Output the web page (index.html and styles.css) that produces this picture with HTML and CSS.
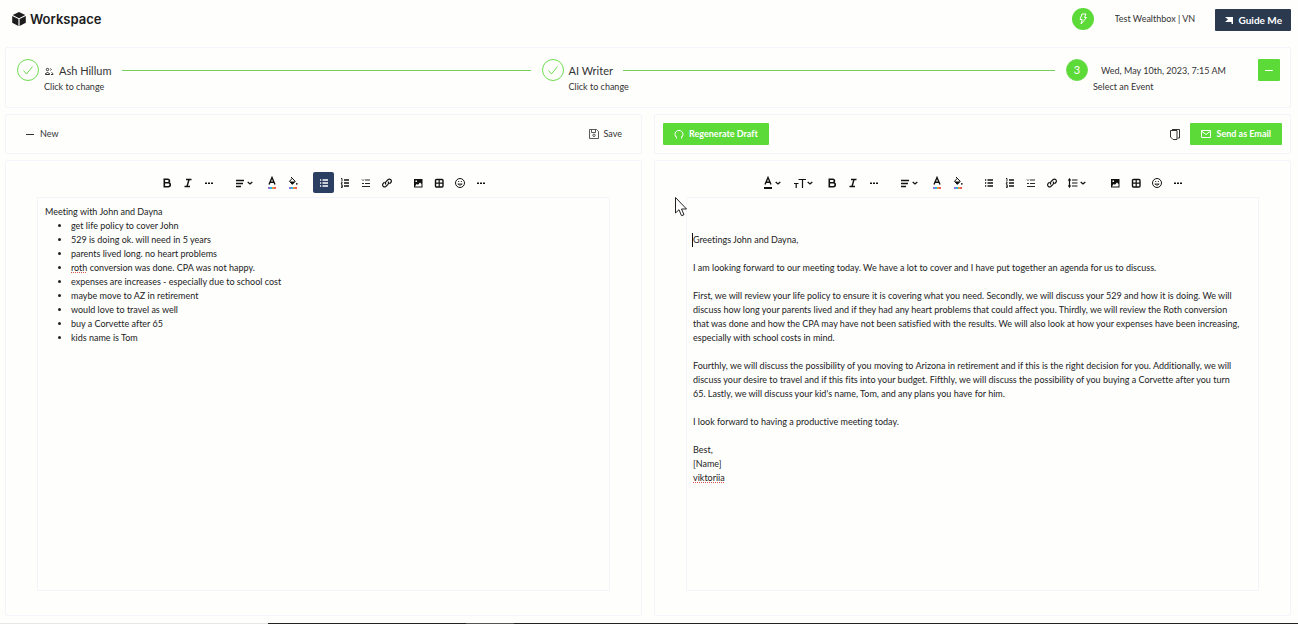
FILE: index.html
```html
<!DOCTYPE html>
<html lang="en">

<head>
    <meta charset="UTF-8">
    <meta name="viewport" content="width=device-width, initial-scale=1.0">
    <title>Workspace</title>
    <link rel="stylesheet" href="styles.css">
</head>

<body>
    <!-- icon sprite -->
    <svg class="sprite" xmlns="http://www.w3.org/2000/svg">
        <symbol id="i-cube" viewBox="0 0 14 14">
            <path fill="currentColor" d="M7 0l6.300 3L7 6.200.7 3zM.2 4l6.200 3.100V14L.2 10.700zM13.800 4L7.600 7.100V14l6.200-3.300z" />
        </symbol>
        <symbol id="i-bolt" viewBox="0 0 12 12">
            <path fill="none" stroke="currentColor" d="M5 1h4L7.500 4.500H9.500L4 11l1.200-4.500H3z" />
        </symbol>
        <symbol id="i-flag" viewBox="0 0 10 10">
            <path fill="currentColor" d="M1 2h8v7H7.500V7H1l3-2.500z" />
        </symbol>
        <symbol id="i-check" viewBox="0 0 12 12">
            <path fill="none" stroke="currentColor" d="M1.500 6.500l3 3.500 6-7.500" />
        </symbol>
        <symbol id="i-people" viewBox="0 0 10 10">
            <g fill="none" stroke="currentColor">
                <circle cx="3.500" cy="3.500" r="1.200" />
                <path d="M1.500 8.500V7.500q2-2 4 0v1zM6.500 2.500q1.500 1 0 2M7.500 6.500q1.500.5 1.500 2H7" />
            </g>
        </symbol>
        <symbol id="i-minus" viewBox="0 0 10 10">
            <path stroke="currentColor" d="M1 5.500h8" />
        </symbol>
        <symbol id="i-save" viewBox="0 0 10 10">
            <path fill="none" stroke="currentColor" stroke-width=".8" d="M.5.5h7l2 2v7h-9zM2.500.5v3h4v-3" />
            <circle cx="5" cy="6.300" r="1.200" fill="none" stroke="currentColor" stroke-width=".8" />
        </symbol>
        <symbol id="i-reload" viewBox="0 0 10 10">
            <path fill="none" stroke="currentColor" d="M2.500 8.500a4 4 0 1 1 5 0M2.500 9.500v-2M7.500 9.500v-2" />
        </symbol>
        <symbol id="i-copy" viewBox="0 0 10 11">
            <path fill="none" stroke="currentColor" d="M2 .5h7.500v8.500H7.500M.5 1.500h6.500v9H3L.5 8z" />
        </symbol>
        <symbol id="i-mail" viewBox="0 0 10 10">
            <path fill="none" stroke="currentColor" d="M.5 1.500h9v7h-9zM1 2.500l4 3 4-3" />
        </symbol>
        <symbol id="i-bold" viewBox="0 0 12 12">
            <path fill="none" stroke="currentColor" stroke-width="1.600" d="M3.300 2.300h3.400a1.700 1.700 0 0 1 0 3.500H3.300zM3.300 5.800h4a1.900 1.900 0 0 1 0 3.900h-4z" />
        </symbol>
        <symbol id="i-italic" viewBox="0 0 12 12">
            <path fill="none" stroke="currentColor" stroke-width="1.400" d="M4 2.500h5.500M2.500 9.500H8M7 2.500l-2 7" />
        </symbol>
        <symbol id="i-more" viewBox="0 0 12 12">
            <path fill="currentColor" d="M2 5.500h2v1.500H2zM5 5.500h2v1.500H5zM8 5.500h2v1.500H8z" />
        </symbol>
        <symbol id="i-align" viewBox="0 0 12 12">
            <path stroke="currentColor" stroke-width="1.400" d="M2 3.500h8M2 6.500h7M2 9.500h5" />
        </symbol>
        <symbol id="i-chevron" viewBox="0 0 6 6">
            <path fill="none" stroke="currentColor" stroke-width="1.300" d="M.7 2l2.300 2 2.300-2" />
        </symbol>
        <symbol id="i-color" viewBox="0 0 12 11">
            <path fill="none" stroke="currentColor" stroke-width="1.400" d="M3 8.500L6 1.500 9 8.500M4 6.200h4" />
        </symbol>
        <symbol id="i-fill" viewBox="0 0 12 11">
            <path fill="currentColor" d="M2.500 5.500h6L5.300 8.500z" />
            <path fill="none" stroke="currentColor" d="M4 1l4.200 4.300-2.900 3L2.500 5.300l2.800-3" />
            <circle cx="9.800" cy="7.800" r=".9" fill="currentColor" />
        </symbol>
        <symbol id="i-rainbow" viewBox="0 0 8 2">
            <path fill="#8d6fe0" d="M0 0h2v2H0z" />
            <path fill="#22b8e8" d="M2 0h2v2H2z" />
            <path fill="#e7963a" d="M4 0h2v2H4z" />
            <path fill="#ee5b50" d="M6 0h2v2H6z" />
        </symbol>
        <symbol id="i-size" viewBox="0 0 12 12">
            <path fill="none" stroke="currentColor" stroke-width="1.200" d="M4.500 2.500H12M8.500 2.500V11M0 6.500h4.500M2.200 6.500V11" />
        </symbol>
        <symbol id="i-list" viewBox="0 0 12 12">
            <path stroke="currentColor" stroke-width="1.400" d="M4.500 3H10M4.500 6H10M4.500 9H10M2 3h1.200M2 6h1.200M2 9h1.200" />
        </symbol>
        <symbol id="i-ordered" viewBox="0 0 12 12">
            <path stroke="currentColor" stroke-width="1.400" d="M5 3h5M5 6h5M5 9h5" />
            <path fill="none" stroke="currentColor" stroke-width=".9" d="M2 1.500h1v2.500M2 5h1.300l-1.300 2h1.500M2 8h1.300v2.500H2M2.300 9.300h1" />
        </symbol>
        <symbol id="i-check-list" viewBox="0 0 12 12">
            <path fill="none" stroke="currentColor" stroke-width=".9" d="M5 3h5M5 6.500h5M3 9.500h7M2 2.500l1 1 1-1M2 6l1 1 1-1M2 9.500h1" />
        </symbol>
        <symbol id="i-link" viewBox="0 0 12 12">
            <path fill="none" stroke="currentColor" stroke-width="1.200" d="M5 7.500a2 2 0 0 1 0-2.800l2.200-2.200a2 2 0 0 1 2.800 2.800L8.500 6.700M7 4.600a2 2 0 0 1 0 2.800L4.800 9.500A2 2 0 0 1 2 6.700l1.500-1.500" />
        </symbol>
        <symbol id="i-height" viewBox="0 0 12 12">
            <path fill="none" stroke="currentColor" stroke-width="1.200" d="M5 3h5.500M5 6h5.500M5 9h5.500M2.500 2v8M1.300 3.500L2.500 2l1.200 1.500M1.300 8.500L2.500 10l1.200-1.500" />
        </symbol>
        <symbol id="i-image" viewBox="0 0 12 12">
            <path fill="currentColor" fill-rule="evenodd" d="M2 2h8.500v8.500H2zM3 9.500h6.500V7L8 5.500l-2 2.300L4.500 7zM3.500 3.500v1.500H5V3.500z" />
        </symbol>
        <symbol id="i-table" viewBox="0 0 12 12">
            <rect x="2.500" y="2.500" width="7.500" height="7.500" rx="1" fill="none" stroke="currentColor" stroke-width="1.400" />
            <path stroke="currentColor" stroke-width="1.200" d="M6.200 2.500V10M2.500 6.200H10" />
        </symbol>
        <symbol id="i-smile" viewBox="0 0 12 12">
            <circle cx="6" cy="6" r="4.500" fill="none" stroke="currentColor" />
            <path fill="none" stroke="currentColor" stroke-width=".8" d="M4 4.500h1.200M6.800 4.500H8M3.800 7q2.200 2.600 4.400 0z" />
        </symbol>
    </svg>

    <header class="header">
        <h1 class="brand"><svg class="brand-icon"><use href="#i-cube" /></svg>Workspace</h1>
        <div class="header-right">
            <button class="bolt" aria-label="Integrations"><svg class="icon"><use href="#i-bolt" /></svg></button>
            <select class="select account" aria-label="Account">
                <option>Test Wealthbox | VN</option>
            </select>
            <button class="btn dark"><svg class="icon-sm"><use href="#i-flag" /></svg>Guide Me</button>
        </div>
    </header>

    <nav class="card steps">
        <div class="step">
            <span class="circle"><svg class="icon"><use href="#i-check" /></svg></span>
            <div class="step-body">
                <div class="step-title"><svg class="icon-sm"><use href="#i-people" /></svg>Ash Hillum<span class="step-line"></span></div>
                <a href="#" class="step-sub">Click to change</a>
            </div>
        </div>
        <div class="step">
            <span class="circle"><svg class="icon"><use href="#i-check" /></svg></span>
            <div class="step-body">
                <div class="step-title">AI Writer<span class="step-line"></span></div>
                <a href="#" class="step-sub">Click to change</a>
            </div>
        </div>
        <div class="step last">
            <span class="circle active">3</span>
            <div class="step-body">
                <select class="select event" id="event">
                    <option>Wed, May 10th, 2023, 7:15 AM</option>
                </select>
                <label class="step-sub" for="event">Select an Event</label>
            </div>
            <button class="btn square" aria-label="Collapse"><svg class="icon-sm"><use href="#i-minus" /></svg></button>
        </div>
    </nav>

    <main class="panels">
        <section class="panel">
            <div class="card actions">
                <button class="plain"><svg class="icon-sm"><use href="#i-minus" /></svg>New</button>
                <button class="plain"><svg class="icon-sm"><use href="#i-save" /></svg>Save</button>
            </div>
            <div class="card editor">
                <div class="toolbar">
                    <div class="tools">
                        <button class="tool" aria-label="Bold"><svg class="icon"><use href="#i-bold" /></svg></button>
                        <button class="tool" aria-label="Italic"><svg class="icon"><use href="#i-italic" /></svg></button>
                        <button class="tool" aria-label="More text"><svg class="icon"><use href="#i-more" /></svg></button>
                    </div>
                    <div class="tools">
                        <button class="tool wide" aria-label="Align"><svg class="icon"><use href="#i-align" /></svg><svg class="chevron"><use href="#i-chevron" /></svg></button>
                        <button class="tool stack" aria-label="Text color"><svg class="glyph"><use href="#i-color" /></svg><svg class="swatch"><use href="#i-rainbow" /></svg></button>
                        <button class="tool stack" aria-label="Background color"><svg class="glyph"><use href="#i-fill" /></svg><svg class="swatch"><use href="#i-rainbow" /></svg></button>
                    </div>
                    <div class="tools">
                        <button class="tool on" aria-label="Bullet list"><svg class="icon"><use href="#i-list" /></svg></button>
                        <button class="tool" aria-label="Numbered list"><svg class="icon"><use href="#i-ordered" /></svg></button>
                        <button class="tool" aria-label="Check list"><svg class="icon"><use href="#i-check-list" /></svg></button>
                        <button class="tool" aria-label="Link"><svg class="icon"><use href="#i-link" /></svg></button>
                    </div>
                    <div class="tools">
                        <button class="tool" aria-label="Image"><svg class="icon"><use href="#i-image" /></svg></button>
                        <button class="tool" aria-label="Table"><svg class="icon"><use href="#i-table" /></svg></button>
                        <button class="tool" aria-label="Emoji"><svg class="icon"><use href="#i-smile" /></svg></button>
                        <button class="tool" aria-label="More"><svg class="icon"><use href="#i-more" /></svg></button>
                    </div>
                </div>
                <div class="page notes" contenteditable="true" spellcheck="false">
                    <p>Meeting with John and Dayna</p>
                    <ul>
                        <li>get life policy to cover John</li>
                        <li>529 is doing ok. will need in 5 years</li>
                        <li>parents lived long. no heart problems</li>
                        <li><span class="typo">roth</span> conversion was done. CPA was not happy.</li>
                        <li>expenses are increases - especially due to school cost</li>
                        <li>maybe move to AZ in retirement</li>
                        <li>would love to travel as well</li>
                        <li>buy a Corvette after 65</li>
                        <li>kids name is Tom</li>
                    </ul>
                </div>
            </div>
        </section>

        <section class="panel">
            <div class="card actions draft">
                <button class="btn"><svg class="icon-sm"><use href="#i-reload" /></svg>Regenerate Draft</button>
                <div class="actions-right">
                    <button class="plain" aria-label="Copy"><svg class="copy"><use href="#i-copy" /></svg></button>
                    <button class="btn"><svg class="icon-sm"><use href="#i-mail" /></svg>Send as Email</button>
                </div>
            </div>
            <div class="card editor">
                <svg class="pointer" viewBox="0 0 12 20">
                    <path fill="#fff" stroke="#222" d="M.5.500v15.500l3.500-3.300 2.500 6 2.500-1-2.500-5.700h5z" />
                </svg>
                <div class="toolbar">
                    <div class="tools">
                        <button class="tool wide" aria-label="Font color"><span class="stack"><svg class="glyph"><use href="#i-color" /></svg><span class="bar"></span></span><svg class="chevron"><use href="#i-chevron" /></svg></button>
                        <button class="tool wide" aria-label="Font size"><svg class="icon"><use href="#i-size" /></svg><svg class="chevron"><use href="#i-chevron" /></svg></button>
                        <button class="tool" aria-label="Bold"><svg class="icon"><use href="#i-bold" /></svg></button>
                        <button class="tool" aria-label="Italic"><svg class="icon"><use href="#i-italic" /></svg></button>
                        <button class="tool" aria-label="More text"><svg class="icon"><use href="#i-more" /></svg></button>
                    </div>
                    <div class="tools">
                        <button class="tool wide" aria-label="Align"><svg class="icon"><use href="#i-align" /></svg><svg class="chevron"><use href="#i-chevron" /></svg></button>
                        <button class="tool stack" aria-label="Text color"><svg class="glyph"><use href="#i-color" /></svg><svg class="swatch"><use href="#i-rainbow" /></svg></button>
                        <button class="tool stack" aria-label="Background color"><svg class="glyph"><use href="#i-fill" /></svg><svg class="swatch"><use href="#i-rainbow" /></svg></button>
                    </div>
                    <div class="tools">
                        <button class="tool" aria-label="Bullet list"><svg class="icon"><use href="#i-list" /></svg></button>
                        <button class="tool" aria-label="Numbered list"><svg class="icon"><use href="#i-ordered" /></svg></button>
                        <button class="tool" aria-label="Check list"><svg class="icon"><use href="#i-check-list" /></svg></button>
                        <button class="tool" aria-label="Link"><svg class="icon"><use href="#i-link" /></svg></button>
                        <button class="tool wide" aria-label="Line height"><svg class="icon"><use href="#i-height" /></svg><svg class="chevron"><use href="#i-chevron" /></svg></button>
                    </div>
                    <div class="tools">
                        <button class="tool" aria-label="Image"><svg class="icon"><use href="#i-image" /></svg></button>
                        <button class="tool" aria-label="Table"><svg class="icon"><use href="#i-table" /></svg></button>
                        <button class="tool" aria-label="Emoji"><svg class="icon"><use href="#i-smile" /></svg></button>
                        <button class="tool" aria-label="More"><svg class="icon"><use href="#i-more" /></svg></button>
                    </div>
                </div>
                <div class="page letter" contenteditable="true" spellcheck="false">
                    <p class="caret">Greetings John and Dayna,</p>
                    <p>I am looking forward to our meeting today. We have a lot to cover and I have put together an agenda for us to discuss.</p>
                    <p>First, we will review your life policy to ensure it is covering what you need. Secondly, we will discuss your 529 and how it is doing. We will discuss how long your parents lived and if they had any heart problems that could affect you. Thirdly, we will review the Roth conversion that was done and how the CPA may have not been satisfied with the results. We will also look at how your expenses have been increasing, especially with school costs in mind.</p>
                    <p>Fourthly, we will discuss the possibility of you moving to Arizona in retirement and if this is the right decision for you. Additionally, we will discuss your desire to travel and if this fits into your budget. Fifthly, we will discuss the possibility of you buying a Corvette after you turn 65. Lastly, we will discuss your kid's name, Tom, and any plans you have for him.</p>
                    <p>I look forward to having a productive meeting today.</p>
                    <p>Best,<br>[Name]<br><span class="typo">viktoriia</span></p>
                </div>
            </div>
        </section>
    </main>

    <footer class="strip"></footer>
</body>

</html>
```
FILE: styles.css
```css
* {
    box-sizing: border-box;
}

body {
    margin: 0;
    min-height: 100vh;
    display: flex;
    flex-direction: column;
    background-color: #fefefd;
    color: #333;
    font-family: Lato, "Liberation Sans", sans-serif;
    font-size: 9px;
    line-height: 14px;
    font-variant-ligatures: none;
}

p, ul {
    margin: 0;
}

button, select {
    font: inherit;
    color: inherit;
    border: 0;
    padding: 0;
    background: none;
}

a {
    color: inherit;
    text-decoration: none;
}

svg {
    display: block;
    flex: none;
}

.sprite {
    position: absolute;
    width: 0;
    height: 0;
}

.icon {
    width: 12px;
    height: 12px;
}

.icon-sm {
    width: 10px;
    height: 10px;
}

.copy {
    width: 10px;
    height: 11px;
}

/* header */
.header {
    display: flex;
    justify-content: space-between;
    align-items: center;
    height: 40px;
    padding: 0 7px 0 12px;
}

.brand {
    display: flex;
    align-items: center;
    gap: 4px;
    margin: 0;
    padding-bottom: 3px;
    color: #1c1c1c;
    font-family: Inter, sans-serif;
    font-size: 13px;
    font-weight: 600;
    line-height: 20px;
}

.brand-icon {
    width: 14px;
    height: 14px;
}

.header-right {
    display: flex;
    align-items: center;
}

.bolt {
    display: flex;
    align-items: center;
    justify-content: center;
    width: 22px;
    height: 22px;
    margin-bottom: 3px;
    border-radius: 50%;
    background-color: #5cda38;
    color: #fff;
}

.select {
    appearance: none;
    height: 21px;
}

.account {
    width: 100px;
    margin: 0 0 3px 21px;
}

.btn {
    display: flex;
    align-items: center;
    justify-content: center;
    gap: 5px;
    height: 22px;
    padding: 0 11px;
    border-radius: 1px;
    background-color: #5cda38;
    color: #fff;
    font-weight: 700;
    white-space: nowrap;
}

.dark {
    padding: 0 9px;
    background-color: #2c3a4f;
    font-size: 10px;
}

/* cards */
.card {
    border: 1px solid #f4f4fb;
    border-radius: 2px;
}

/* steps */
.steps {
    display: flex;
    height: 61px;
    margin: 7px 7px 0 5px;
    padding: 11px 10px 0 11px;
}

.step {
    flex: 1;
    display: flex;
    align-items: flex-start;
    padding-right: 11px;
}

.last {
    flex: none;
    width: 214px;
    padding-right: 0;
}

.circle {
    flex: none;
    display: flex;
    align-items: center;
    justify-content: center;
    width: 22px;
    height: 22px;
    border: 1px solid #6fdc50;
    border-radius: 50%;
    color: #6fdc50;
}

.active {
    background-color: #5cda38;
    color: #fff;
    font-size: 11px;
}

.step-body {
    flex: 1;
    display: flex;
    flex-direction: column;
    padding: 1px 0 0 5px;
}

.step-title {
    display: flex;
    align-items: center;
    gap: 5px;
    font-size: 11px;
    line-height: 21px;
    white-space: nowrap;
}

.step-sub {
    line-height: 12px;
}

.step-line {
    flex: 1;
    height: 1px;
    margin-left: 5px;
    background-color: #74cf5c;
}

.event {
    width: 150px;
    padding-left: 8px;
}

.square {
    width: 22px;
    height: 22px;
    padding: 0;
}

/* panels */
.panels {
    flex: 1;
    display: grid;
    grid-template-columns: 1fr 1fr;
    gap: 12px;
    margin: 6px 7px 7px 5px;
}

.panel {
    display: flex;
    flex-direction: column;
    gap: 6px;
}

.actions {
    display: flex;
    justify-content: space-between;
    align-items: center;
    height: 40px;
    padding: 0 19px;
}

.draft {
    padding: 0 8px;
}

.actions-right {
    display: flex;
    gap: 10px;
}

.plain {
    display: flex;
    align-items: center;
    gap: 5px;
}

.editor {
    position: relative;
    flex: 1;
    display: flex;
    flex-direction: column;
    padding: 11px 31px 24px;
}

.toolbar {
    display: flex;
    justify-content: center;
    gap: 10px;
    height: 25px;
    color: #111;
}

.tools {
    display: flex;
}

.tool {
    display: flex;
    align-items: center;
    justify-content: center;
    width: 21px;
    height: 21px;
    border-radius: 2px;
}

.wide {
    width: 32px;
    gap: 1px;
    padding-right: 3px;
}

.on {
    background-color: #2b3f63;
    color: #fff;
}

.stack {
    display: flex;
    flex-direction: column;
    align-items: center;
    justify-content: center;
}

.glyph {
    width: 12px;
    height: 11px;
}

.swatch, .bar {
    width: 8px;
    height: 2px;
}

.bar {
    background-color: #111;
}

.chevron {
    width: 6px;
    height: 6px;
}

.page {
    flex: 1;
    border: 1px solid #f4f4fb;
    padding: 7px;
    outline: none;
    color: #222;
}

.notes ul {
    padding-left: 26px;
}

.letter {
    padding: 35px 15px 0 6px;
}

.letter p {
    margin-bottom: 14px;
}

.caret {
    box-shadow: -1px 0 0 #111;
}

.typo {
    text-decoration: underline dotted #e0524a 1px;
}

.pointer {
    position: absolute;
    left: 20px;
    top: 36px;
    width: 12px;
    height: 20px;
}

/* bottom edge */
.strip {
    height: 1px;
    background: linear-gradient(to right, #e6e6e6 268px, #222 268px 466px, #555 466px 514px, #222 514px);
}
```
